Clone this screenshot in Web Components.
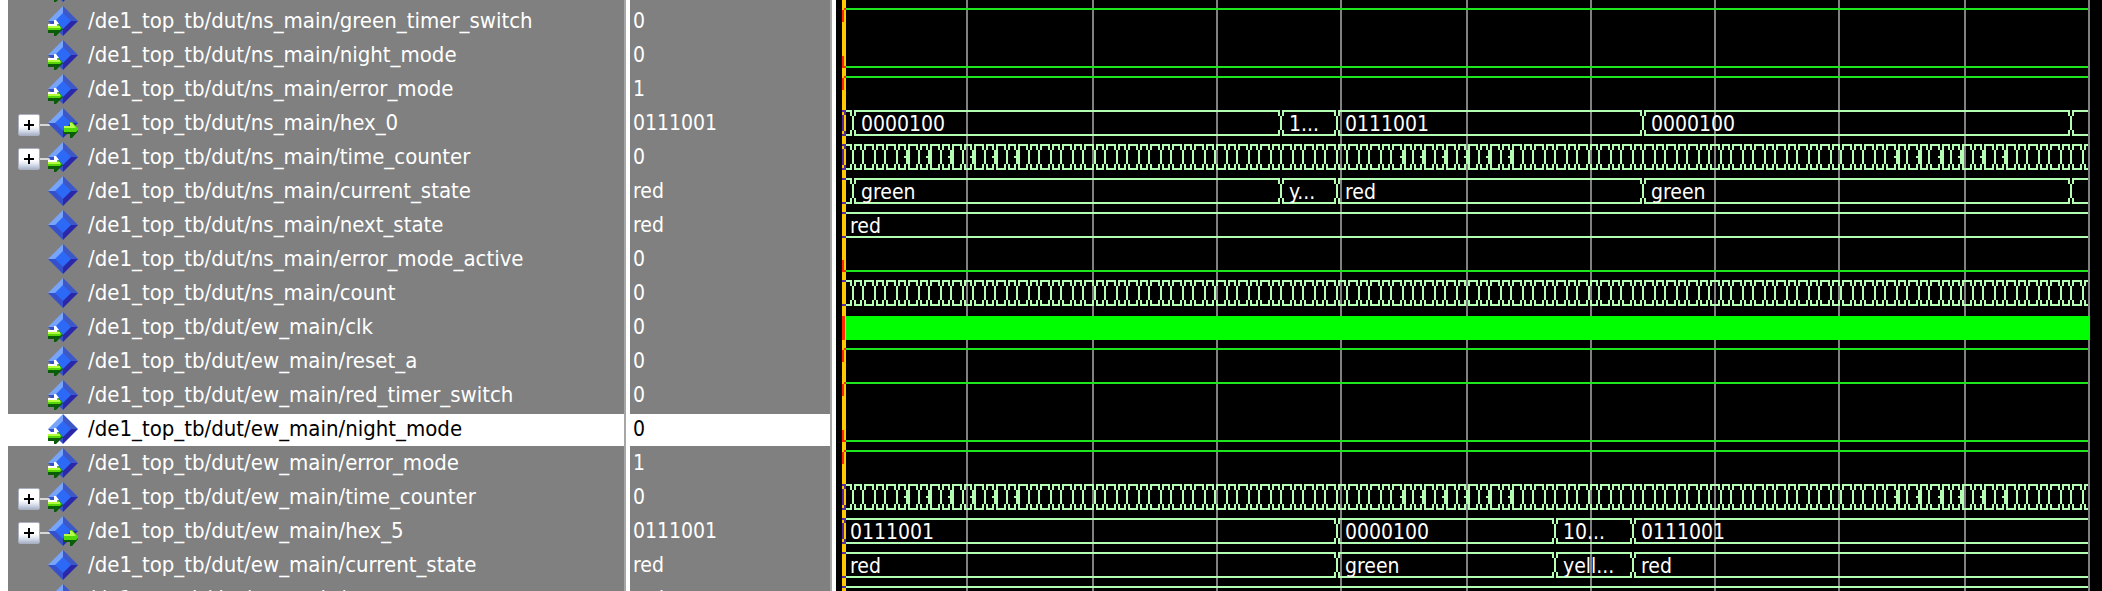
<!DOCTYPE html>
<html lang="en">
<head>
<meta charset="utf-8">
<title>Wave</title>
<style>
html, body { margin: 0; height: 100%; background: #fff; }
body { overflow: hidden; font-family: "DejaVu Sans Condensed", "DejaVu Sans", sans-serif; }
</style>
</head>
<body>
<wave-window></wave-window>

<template id="window-template">
  <style>
    :host {
      display: grid;
      grid-template-columns: minmax(0, 616fr) 6px minmax(0, 200fr) 6px minmax(0, 1266fr);
      height: 100vh;
      box-sizing: border-box;
      padding-left: 8px;
      overflow: hidden;
    }
    .sash { background: linear-gradient(to right, #a6a6a6 2px, #fff 2px); }
  </style>
  <signal-panel id="names"></signal-panel>
  <div class="sash"></div>
  <signal-panel id="values"></signal-panel>
  <div class="sash"></div>
  <wave-panel id="waves"></wave-panel>
</template>

<template id="panel-template">
  <style>
    :host {
      display: flex; flex-direction: column; gap: 2px;
      min-height: 0; overflow: hidden; background: #808080; color: #fff;
    }
  </style>
  <slot></slot>
</template>

<template id="wave-panel-template">
  <style>
    :host { display: block; min-height: 0; overflow: hidden; background: #000; padding: 0 12px 0 6px; }
    .area { position: relative; display: flex; flex-direction: column; gap: 2px; min-height: 100%; }
    svg { position: absolute; inset: 0; width: 100%; height: 100%; overflow: visible; }
    .cursor { position: absolute; left: 0; top: 0; bottom: 0; width: 4px; background: #ffc800; }
  </style>
  <div class="area"><svg aria-hidden="true"><path fill="#808080"></path></svg><div class="cursor"></div><slot></slot></div>
</template>

<template id="name-template">
  <style>
    :host {
      display: flex; flex: none; align-items: flex-start; height: 32px;
      padding-left: 10px; font-size: 22px; line-height: 30px; white-space: nowrap;
    }
    :host([selected]) { background: #fff; color: #000; }
    :host([partial]) { height: 4px; align-items: flex-end; padding-bottom: 2px; box-sizing: border-box; overflow: hidden; }
    .tree { display: flex; align-items: center; width: 30px; height: 34px; flex: none; }
    :host([partial]) .tree { height: 0; }
    button {
      width: 22px; height: 22px; padding: 0; border: 1px solid #aab0c0; border-radius: 2px;
      background: linear-gradient(#fff 0 55%, #dfe5f0 75%, #a9b4ca); display: grid; place-items: center;
    }
    .line { flex: 1; height: 2px; background: #d8d8d8; margin-right: -2px; }
    signal-icon { margin-right: 10px; }
  </style>
  <div class="tree"></div><signal-icon></signal-icon><span class="name"></span>
</template>

<template id="icon-template">
  <style>:host { display: block; flex: none; width: 30px; height: 30px; } svg { display: block; }
  .arrow { display: none; }
  :host([kind="in"]) .in, :host([kind="out"]) .out { display: inline; }</style>
  <svg width="30" height="30" viewBox="0 0 30 30" aria-hidden="true">
    <path fill="#78a4fa" d="M15 0V8L8 15H0Z"/>
    <path fill="#3b57c8" d="M15 0L30 15H22L15 8Z"/>
    <path fill="#2a28a8" d="M30 15L15 30V22L22 15Z"/>
    <path fill="#3650cc" d="M0 15L15 30V22L8 15Z"/>
    <path fill="#2b69f6" d="M15 7L23 15L15 23L7 15Z"/>
    <g class="arrow in">
      <path fill="#0b5c08" d="M0 20H6V16H8L15 23L8 30H6V27H0Z"/>
      <path fill="#55d408" d="M0 20H6V16H8L14 22L12 24H0Z"/>
      <path fill="#b4ff3c" d="M0 20H12V22H0Z"/>
      <path fill="#fff" d="M0 18H6V14H8L11 18H9V20H0Z"/>
    </g>
    <g class="arrow out">
      <path fill="#0b5c08" d="M16 19H22V15H24L31 22L24 30H22V26H16Z"/>
      <path fill="#50d808" d="M16 18H22V14H24L30 20V22L28 24H16Z"/>
      <path fill="#b8ff48" d="M16 18H22V15H24L28 20H16Z"/>
    </g>
  </svg>
</template>

<template id="value-template">
  <style>
    :host { display: block; flex: none; height: 32px; padding-left: 3px; font-size: 21px; line-height: 30px; white-space: nowrap; }
    :host([selected]) { background: #fff; color: #000; }
    :host([partial]) { height: 4px; }
  </style>
  <slot></slot>
</template>

<template id="trace-template">
  <style>
    :host { display: block; flex: none; position: relative; height: 32px; color: #fff; font-size: 21px; line-height: 32px; }
    :host([partial]) { height: 4px; }
    svg { position: absolute; inset: 0; width: 100%; height: 100%; overflow: visible; }
    .labels { position: relative; display: grid; height: 32px; }
    .labels span { padding-left: 8px; overflow: hidden; white-space: nowrap; }
  </style>
  <svg aria-hidden="true" shape-rendering="crispEdges"><path class="wave"></path><path class="mark"></path></svg>
  <div class="labels"></div>
</template>

<script>
const SPAN = 1248;          // time units across the visible wave area
const GRID = 124.6;         // distance between grid lines
const TICK = 10.98;         // distance between counter changes
const snap = v => Math.round(v / 2) * 2;
const box = (x, y, w, h) => `M${x} ${y}h${w}v${h}h${-w}z`;

const NS_STATE = [11, 439, 495, 801, 1229];
const EW_STATE = [495, 713, 791];
const ticks = Array.from({ length: 113 }, (_, i) => 11 + i * TICK);
const glitches = new Set();
for (const first of [5, 50, 95]) for (let k = 0; k < 6; k++) glitches.add(first + k * 2);

const NS = '/de1_top_tb/dut/ns_main/', EW = '/de1_top_tb/dut/ew_main/';
const signals = [
  { name: '', value: '', icon: 'in', wave: 'none', partial: true },
  { name: NS + 'green_timer_switch', value: '0', icon: 'in', wave: 'high' },
  { name: NS + 'night_mode', value: '0', icon: 'in', wave: 'low' },
  { name: NS + 'error_mode', value: '1', icon: 'in', wave: 'high' },
  { name: NS + 'hex_0', value: '0111001', icon: 'out', tree: true, wave: 'bus', at: NS_STATE, labels: ['', '0000100', '1...', '0111001', '0000100', ''] },
  { name: NS + 'time_counter', value: '0', icon: 'in', tree: true, wave: 'bus', at: ticks, glitches },
  { name: NS + 'current_state', value: 'red', wave: 'bus', at: NS_STATE, labels: ['', 'green', 'y...', 'red', 'green', ''] },
  { name: NS + 'next_state', value: 'red', wave: 'bus', at: [], labels: ['red'] },
  { name: NS + 'error_mode_active', value: '0', wave: 'low' },
  { name: NS + 'count', value: '0', wave: 'bus', at: ticks },
  { name: EW + 'clk', value: '0', icon: 'in', wave: 'solid' },
  { name: EW + 'reset_a', value: '0', icon: 'in', wave: 'high' },
  { name: EW + 'red_timer_switch', value: '0', icon: 'in', wave: 'high' },
  { name: EW + 'night_mode', value: '0', icon: 'in', wave: 'low', selected: true },
  { name: EW + 'error_mode', value: '1', icon: 'in', wave: 'high' },
  { name: EW + 'time_counter', value: '0', icon: 'in', tree: true, wave: 'bus', at: ticks, glitches },
  { name: EW + 'hex_5', value: '0111001', icon: 'out', tree: true, wave: 'bus', at: EW_STATE, labels: ['0111001', '0000100', '10...', '0111001'] },
  { name: EW + 'current_state', value: 'red', wave: 'bus', at: EW_STATE, labels: ['red', 'green', 'yell...', 'red'] },
  { name: EW + 'next_state', value: 'red', wave: 'bus', at: [], labels: ['red'] }
];

class Base extends HTMLElement {
  constructor(id) {
    super();
    this.attachShadow({ mode: 'open' }).append(document.getElementById(id).content.cloneNode(true));
  }
  $(q) { return this.shadowRoot.querySelector(q); }
}

customElements.define('signal-icon', class extends Base { constructor() { super('icon-template'); } });
customElements.define('signal-panel', class extends Base { constructor() { super('panel-template'); } });
customElements.define('signal-value', class extends Base { constructor() { super('value-template'); } });

customElements.define('signal-name', class extends Base {
  constructor() { super('name-template'); }
  set signal(s) {
    this.$('.name').textContent = s.name;
    if (s.icon) this.$('signal-icon').setAttribute('kind', s.icon);
    if (s.tree) this.$('.tree').innerHTML =
      `<button type="button" aria-label="Expand ${s.name}"><svg width="10" height="10" aria-hidden="true"><path d="M4 0h2v4h4v2H6v4H4V6H0V4h4z"/></svg></button><div class="line"></div>`;
  }
});

customElements.define('signal-trace', class extends Base {
  constructor() { super('trace-template'); }
  set signal(s) {
    this.data = s;
    if (!s.labels) return;
    const edges = [0, ...s.at, SPAN];
    const grid = this.$('.labels');
    grid.style.gridTemplateColumns = edges.slice(1).map((e, i) => `minmax(0, ${e - edges[i]}fr)`).join(' ');
    s.labels.forEach(t => {
      const span = document.createElement('span');
      span.textContent = t;
      grid.append(span);
    });
  }
  connectedCallback() {
    this.draw();
    new ResizeObserver(() => this.draw()).observe(this);
  }
  draw() {
    const s = this.data, w = this.clientWidth, end = w - 2;
    const wave = this.$('.wave'), mark = this.$('.mark');
    wave.setAttribute('fill', s.wave === 'bus' ? '#b4ffb4' : s.wave === 'solid' ? '#00ff00' : '#1ee61e');
    mark.setAttribute('fill', s.wave === 'bus' ? '#5a2a96' : '#ff2800');
    let d = '', m = '';
    if (s.wave === 'high') { d = box(4, 2, end - 4, 2); m = box(0, 4, 2, 12) + box(2, 2, 2, 2); }
    if (s.wave === 'low') { d = box(4, 26, end - 4, 2); m = box(0, 16, 2, 12) + box(2, 26, 2, 2); }
    if (s.wave === 'solid') { d = box(4, 4, w - 4, 24); m = box(0, 4, 3, 24); }
    if (s.wave === 'bus') {
      let x = 4;
      m = box(0, 2, 4, 2) + box(0, 26, 4, 2);
      if (s.at.length && s.name.match(/hex|time/)) m += box(2, 4, 2, 3) + box(0, 7, 2, 16) + box(2, 23, 2, 3);
      s.at.forEach((t, i) => {
        const c = snap(t * w / SPAN - 1);          // left edge of the crossing's middle stroke
        if (c > end) return;
        d += box(x, 2, c - x, 2) + box(x, 26, c - x, 2);
        d += box(c - 2, 4, 2, 4) + box(c - 2, 22, 2, 4) + box(c, 8, 2, 14);
        if (c + 2 < end) d += box(c + 2, 2, 2, 6) + box(c + 2, 22, 2, 6);
        if (s.glitches && s.glitches.has(i)) d += box(c + 2, 8, 2, 14) + box(c - 2, 14, 2, 2);
        x = c + 2;
      });
      if (x < end) d += box(x, 2, end - x, 2) + box(x, 26, end - x, 2);
    }
    wave.setAttribute('d', d);
    mark.setAttribute('d', m);
  }
});

customElements.define('wave-panel', class extends Base {
  constructor() { super('wave-panel-template'); }
  connectedCallback() {
    this.draw();
    new ResizeObserver(() => this.draw()).observe(this);
  }
  draw() {
    const area = this.$('.area'), w = area.clientWidth, h = area.clientHeight;
    let d = '';
    for (let k = 1; k <= 10; k++) d += box(Math.min(snap(k * GRID * w / SPAN), w - 2), 0, 2, h);
    this.$('path').setAttribute('d', d);
  }
});

customElements.define('wave-window', class extends Base {
  constructor() { super('window-template'); }
  connectedCallback() {
    const add = (panel, tag, s) => {
      const el = document.createElement(tag);
      if (s.selected) el.setAttribute('selected', '');
      if (s.partial) el.setAttribute('partial', '');
      if (tag === 'signal-value') el.textContent = s.value; else el.signal = s;
      this.$(panel).append(el);
    };
    for (const s of signals) {
      add('#names', 'signal-name', s);
      add('#values', 'signal-value', s);
      add('#waves', 'signal-trace', s);
    }
  }
});
</script>
</body>
</html>
